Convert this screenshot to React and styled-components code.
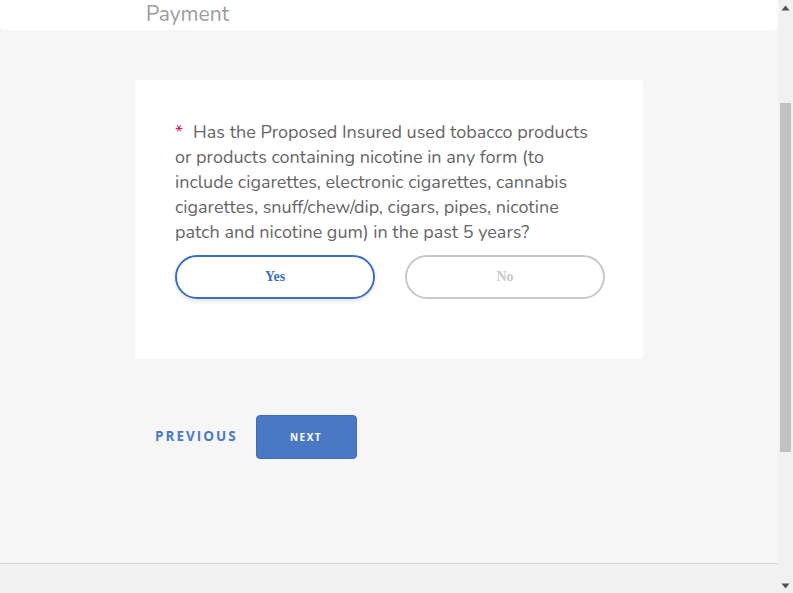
import React, { useState } from "react";
import styled, { createGlobalStyle } from "styled-components";

const Global = createGlobalStyle`
  html, body { margin: 0; padding: 0; overflow: hidden; }
  body { font-family: "Open Sans", "Noto Sans", sans-serif; }
`;

const Shell = styled.div`
  display: flex;
  width: 793px;
  height: 593px;
`;

const Main = styled.div`
  flex: 0 0 778px;
  display: flex;
  flex-direction: column;
  background: #f1f1f1;
`;

const Header = styled.header`
  flex: 0 0 30px;
  background: #ffffff;
  border-radius: 0 0 4px 4px;
  padding-left: 146px;
  font-family: "Nunito", "Noto Sans", sans-serif;
  font-size: 21px;
  line-height: 29px;
  color: #9c9c9c;
  box-sizing: border-box;
`;

const Content = styled.main`
  flex: 0 0 534px;
  background: #f6f6f6;
  border-bottom: 1px solid #d6d6d6;
  box-sizing: border-box;
  padding: 50px 0 0 135px;
  display: flex;
  flex-direction: column;
  align-items: flex-start;
`;

const Card = styled.section`
  width: 508px;
  box-sizing: border-box;
  background: #ffffff;
  border-radius: 3px;
  padding: 40px 38px 60px 40px;
`;

const Question = styled.p`
  margin: 0;
  font-family: "Nunito", "Noto Sans", sans-serif;
  font-size: 18px;
  line-height: 25px;
  color: #666666;
`;

const Required = styled.span`
  color: #f0145a;
  padding-right: 10px;
`;

const Choices = styled.div`
  display: flex;
  gap: 30px;
  margin-top: 10px;
`;

const Choice = styled.button`
  width: 200px;
  height: 44px;
  box-sizing: border-box;
  border-radius: 22px;
  background: #ffffff;
  border: 2px solid ${(p) => (p.$active ? "#3b6fc2" : "#c8c8c8")};
  color: ${(p) => (p.$active ? "#3b6fc2" : "#c8c8c8")};
  box-shadow: ${(p) => (p.$active ? "0 2px 4px rgba(0,0,0,0.12)" : "none")};
  font-family: "Liberation Serif", serif;
  font-weight: bold;
  font-size: 14px;
  cursor: pointer;
  padding: 0;
`;

const Nav = styled.nav`
  display: flex;
  align-items: center;
  gap: 18px;
  margin-top: 56px;
  padding-left: 20px;
`;

const PrevButton = styled.button`
  background: none;
  border: none;
  padding: 0 0 3px;
  font-family: "Open Sans", sans-serif;
  font-weight: 700;
  font-size: 13.5px;
  letter-spacing: 2px;
  color: #4d79c4;
  cursor: pointer;
`;

const NextButton = styled.button`
  width: 101px;
  height: 44px;
  border: 1px solid #3f6db8;
  border-radius: 4px;
  background: #4a78c4;
  color: #ffffff;
  font-family: "Open Sans", sans-serif;
  font-weight: 700;
  font-size: 10px;
  letter-spacing: 1.5px;
  cursor: pointer;
  padding: 0;
`;

const Footer = styled.footer`
  flex: 1;
  background: #f1f1f1;
`;

const Scrollbar = styled.div`
  flex: 0 0 15px;
  display: flex;
  flex-direction: column;
  background: #f1f1f1;
`;

const Arrow = styled.div`
  flex: 0 0 15px;
  display: flex;
  align-items: center;
  justify-content: center;
`;

const Track = styled.div`
  flex: 1;
  padding: 88px 2px 126px;
  display: flex;
`;

const Thumb = styled.div`
  flex: 1;
  background: #c1c1c1;
`;

export default function App() {
  const [answer, setAnswer] = useState("yes");
  return (
    <>
      <Global />
      <Shell>
        <Main>
          <Header>Payment</Header>
          <Content>
            <Card>
              <Question>
                <Required>*</Required>Has the Proposed Insured used tobacco products or
                products containing nicotine in any form (to include cigarettes, electronic
                cigarettes, cannabis cigarettes, snuff/chew/dip, cigars, pipes, nicotine
                patch and nicotine gum) in the past 5 years?
              </Question>
              <Choices>
                <Choice $active={answer === "yes"} onClick={() => setAnswer("yes")}>
                  Yes
                </Choice>
                <Choice $active={answer === "no"} onClick={() => setAnswer("no")}>
                  No
                </Choice>
              </Choices>
            </Card>
            <Nav>
              <PrevButton>PREVIOUS</PrevButton>
              <NextButton>NEXT</NextButton>
            </Nav>
          </Content>
          <Footer />
        </Main>
        <Scrollbar>
          <Arrow>
            <svg width="9" height="6" viewBox="0 0 9 6">
              <path d="M0.5 5.5 L4.5 0.5 L8.5 5.5 Z" fill="#505050" />
            </svg>
          </Arrow>
          <Track>
            <Thumb />
          </Track>
          <Arrow>
            <svg width="9" height="6" viewBox="0 0 9 6">
              <path d="M0.5 0.5 L8.5 0.5 L4.5 5.5 Z" fill="#505050" />
            </svg>
          </Arrow>
        </Scrollbar>
      </Shell>
    </>
  );
}
